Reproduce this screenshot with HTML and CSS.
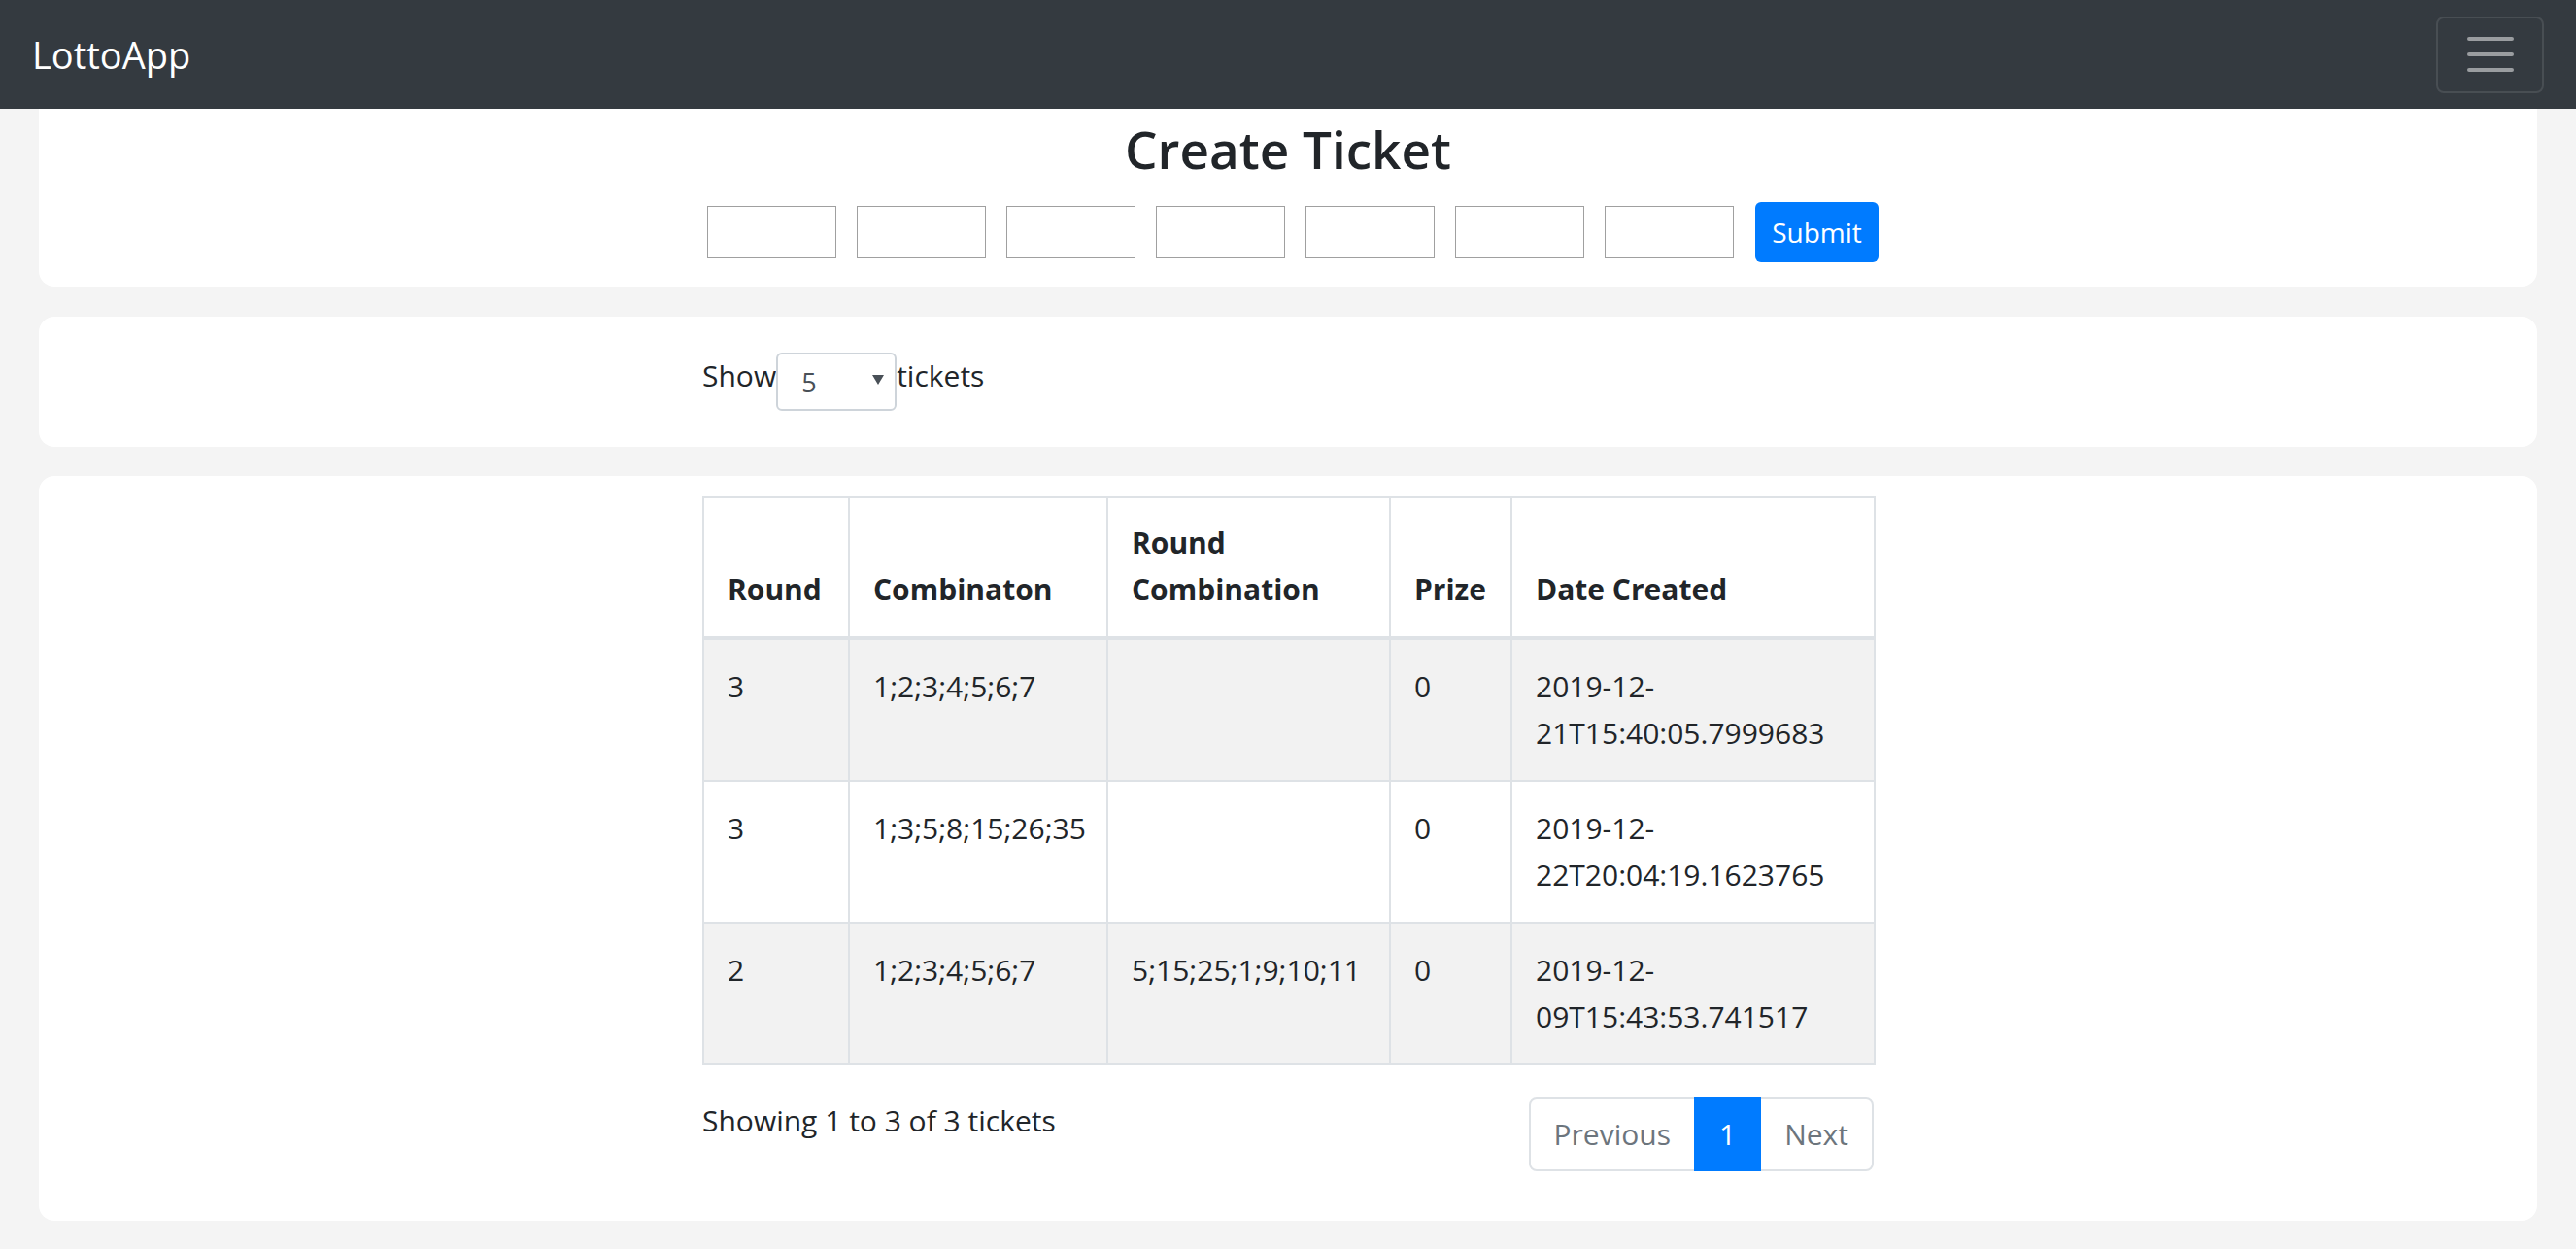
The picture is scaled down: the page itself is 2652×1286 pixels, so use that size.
FILE: index.html
```html
<!DOCTYPE html>
<html lang="en">
<head>
<meta charset="utf-8">
<title>LottoApp</title>
<link rel="stylesheet" href="styles.css">
</head>
<body>
<nav class="navbar">
  <span class="brand">LottoApp</span>
  <button class="toggler" type="button" aria-label="Toggle navigation">
    <span class="bar"></span><span class="bar"></span><span class="bar"></span>
  </button>
</nav>
<main class="page">
  <section class="card card-create">
    <h2 class="title">Create Ticket</h2>
    <form class="ticket-form">
      <input class="num-input" type="text">
      <input class="num-input" type="text">
      <input class="num-input" type="text">
      <input class="num-input" type="text">
      <input class="num-input" type="text">
      <input class="num-input" type="text">
      <input class="num-input" type="text">
      <button class="btn-submit" type="button">Submit</button>
    </form>
  </section>

  <section class="card card-length">
    <div class="inner length-row">
      <span class="lbl">Show</span>
      <span class="select-wrap">
        <select class="select">
          <option>5</option>
          <option>10</option>
          <option>25</option>
        </select>
        <svg class="caret" width="12" height="10" viewBox="0 0 12 10"><path d="M0 0 H12 L6 10 Z" fill="#495057"/></svg>
      </span>
      <span class="lbl">tickets</span>
    </div>
  </section>

  <section class="card card-table">
    <div class="inner">
      <table class="tickets">
        <colgroup>
          <col class="c-round"><col class="c-comb"><col class="c-rcomb"><col class="c-prize"><col class="c-date">
        </colgroup>
        <thead>
          <tr><th>Round</th><th>Combinaton</th><th>Round Combination</th><th>Prize</th><th>Date Created</th></tr>
        </thead>
        <tbody>
          <tr class="odd"><td>3</td><td class="nw">1;2;3;4;5;6;7</td><td class="nw"></td><td>0</td><td>2019-12-21T15:40:05.7999683</td></tr>
          <tr><td>3</td><td class="nw">1;3;5;8;15;26;35</td><td class="nw"></td><td>0</td><td>2019-12-22T20:04:19.1623765</td></tr>
          <tr class="odd"><td>2</td><td class="nw">1;2;3;4;5;6;7</td><td class="nw">5;15;25;1;9;10;11</td><td>0</td><td>2019-12-09T15:43:53.741517</td></tr>
        </tbody>
      </table>
      <div class="table-footer">
        <div class="info">Showing 1 to 3 of 3 tickets</div>
        <ul class="pagination">
          <li class="page-item disabled"><a class="page-link">Previous</a></li>
          <li class="page-item active"><a class="page-link">1</a></li>
          <li class="page-item disabled"><a class="page-link">Next</a></li>
        </ul>
      </div>
    </div>
  </section>
</main>
</body>
</html>
```

FILE: styles.css
```css
* { box-sizing: border-box; }

html, body { height: 100%; }

body {
  margin: 0;
  background: #f4f4f4;
  color: #212529;
  font-family: "Open Sans", "Noto Sans", "Liberation Sans", sans-serif;
  font-size: 30px;
  line-height: 48px;
  overflow: hidden;
}

/* Navbar */
.navbar {
  height: 112px;
  background: #343a40;
  display: flex;
  align-items: center;
  justify-content: space-between;
  padding: 0 33px;
}
.brand {
  color: #fff;
  font-size: 38px;
  line-height: 60px;
}
.toggler {
  width: 111px;
  height: 79px;
  background: transparent;
  border: 2px solid rgba(255, 255, 255, 0.1);
  border-radius: 8px;
  display: flex;
  flex-direction: column;
  align-items: center;
  justify-content: center;
  gap: 12px;
  padding: 0;
}
.toggler .bar {
  display: block;
  width: 48px;
  height: 4px;
  border-radius: 2px;
  background: rgba(255, 255, 255, 0.5);
}

/* Page */
.page {
  padding: 0 40px;
  display: flex;
  flex-direction: column;
}
.card {
  background: #fff;
  border-radius: 16px;
}
.inner {
  width: 1206px;
  margin: 0 auto;
}

/* Create card */
.card-create {
  border-radius: 0 0 16px 16px;
  padding: 9px 0 25px;
  display: flex;
  flex-direction: column;
  align-items: center;
}
.title {
  margin: 0;
  font-size: 53px;
  line-height: 66px;
  font-weight: 600;
  text-align: center;
}
.ticket-form {
  margin: 21px 0 0 10px;
  display: flex;
  align-items: center;
  gap: 21px;
}
.num-input {
  width: 133px;
  height: 54px;
  border: 1px solid #a0a0a0;
  background: #fff;
  margin: 0;
  padding: 0 4px;
  font-family: inherit;
  font-size: 26px;
}
.btn-submit {
  margin-left: 1px;
  height: 62px;
  padding: 0 17px;
  border: none;
  border-radius: 6px;
  background: #007bff;
  color: #fff;
  font-family: inherit;
  font-size: 28px;
  line-height: 40px;
}

/* Length card */
.card-length {
  margin-top: 31px;
  padding: 37px 0;
}
.length-row {
  display: flex;
  align-items: center;
}
.lbl {
  padding-bottom: 12px;
}
.select-wrap {
  position: relative;
  display: inline-flex;
}
.select {
  appearance: none;
  -webkit-appearance: none;
  width: 124px;
  height: 60px;
  border: 2px solid #ced4da;
  border-radius: 6px;
  background: #fff;
  padding: 0 0 0 24px;
  margin: 0;
  color: #495057;
  font-family: inherit;
  font-size: 27px;
}
.caret {
  position: absolute;
  right: 13px;
  top: 23px;
  pointer-events: none;
}

/* Table card */
.card-table {
  margin-top: 30px;
  padding: 21px 0 51px;
}
.tickets {
  width: 1206px;
  table-layout: fixed;
  border-collapse: collapse;
}
.c-round { width: 150px; }
.c-comb { width: 266px; }
.c-rcomb { width: 291px; }
.c-prize { width: 125px; }
.c-date { width: 374px; }

.tickets th,
.tickets td {
  border: 2px solid #dee2e6;
  padding: 24px 24px;
  text-align: left;
  vertical-align: top;
}
.tickets th {
  vertical-align: bottom;
  font-weight: 700;
  padding: 22px 24px 24px;
  border-bottom-width: 4px;
}
.tickets tr.odd td {
  background: #f2f2f2;
}
.tickets td.nw {
  white-space: nowrap;
}

.table-footer {
  margin-top: 33px;
  display: flex;
  justify-content: space-between;
  align-items: flex-start;
}
.info {
  line-height: 48px;
}
.pagination {
  list-style: none;
  margin: 0;
  padding: 0;
  display: flex;
}
.page-link {
  display: block;
  padding: 16px 24px;
  line-height: 40px;
  border: 2px solid #dee2e6;
  margin-left: -2px;
  color: #6c757d;
  background: #fff;
}
.page-item:first-child .page-link {
  margin-left: 0;
  border-radius: 8px 0 0 8px;
}
.page-item:last-child .page-link {
  border-radius: 0 8px 8px 0;
}
.page-item.active .page-link {
  background: #007bff;
  border-color: #007bff;
  color: #fff;
  position: relative;
}
```
